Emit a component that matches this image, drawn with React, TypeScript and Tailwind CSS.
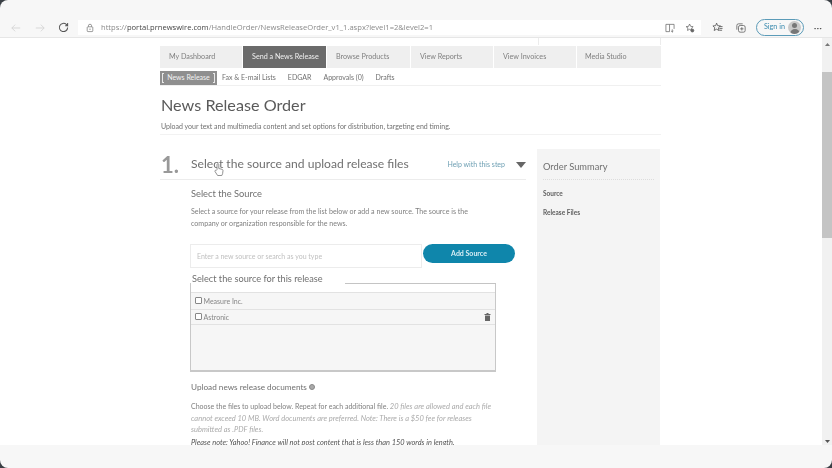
import React from "react";

const tabBase = "flex h-full shrink-0 items-center border-r border-white bg-[#efefef] pl-[9px] text-[#808080]";

export default function App() {
  return (
    <div className="relative flex h-[468px] w-[832px] flex-col overflow-hidden bg-white font-['Lato',sans-serif] text-[#666]">
      {/* browser toolbar */}
      <header className="flex h-[38px] shrink-0 flex-col border-b border-[#e6e6e6] bg-[#f7f7f7] blur-[0.5px]">
        <div className="h-[20px] shrink-0" />
        <div className="flex h-[15px] items-center">
          <div className="flex w-[78px] items-center pl-[11px]">
            <svg width="10" height="10" viewBox="0 0 12 12" fill="none" stroke="#d2d2d2" strokeWidth="1">
              <path d="M11 6H1M5 2 1 6l4 4" />
            </svg>
            <svg className="ml-[14px]" width="10" height="10" viewBox="0 0 12 12" fill="none" stroke="#d2d2d2" strokeWidth="1">
              <path d="M1 6h10M7 2l4 4-4 4" />
            </svg>
            <svg className="ml-[13px]" width="11" height="11" viewBox="0 0 12 12" fill="none" stroke="#555" strokeWidth="1.1">
              <path d="M10.5 6a4.5 4.5 0 1 1-1.4-3.3L10.5 4V1.2M10.5 4H7.8" />
            </svg>
          </div>
          <div className="flex h-full w-[623px] items-center bg-white pl-[8px] text-[#8a8a8a]">
            <svg width="8" height="10" viewBox="0 0 10 11" fill="none" stroke="#777" strokeWidth="0.9">
              <rect x="1.5" y="4" width="7" height="6" rx="1" />
              <path d="M3 4V2.8a2 2 0 0 1 4 0V4M4 7h2" />
            </svg>
            <span className="ml-[7px] whitespace-nowrap font-['Open_Sans',sans-serif] text-[7.6px]">
              https://<span className="text-[#444]">portal.prnewswire.com</span>/HandleOrder/NewsReleaseOrder_v1_1.aspx?level1=2&amp;level2=1
            </span>
            <div className="ml-auto flex items-center pr-[6px]">
              <svg width="10" height="10" viewBox="0 0 11 11" fill="none" stroke="#666" strokeWidth="0.8">
                <path d="M1 1.5h4v8H1zM5 1.5h5v5M8 7v3M6.8 8.8 8 10l1.2-1.2" />
              </svg>
              <svg className="ml-[10px]" width="10" height="10" viewBox="0 0 12 12" fill="none" stroke="#666" strokeWidth="0.9">
                <path d="M5.5 1.2 6.8 4l3 .4-2.2 2 .5 2.5-2.6-1.3L3 8.9l.5-3-2.2-1.5 3-.4z" />
                <circle cx="8.8" cy="9" r="1.8" fill="#666" />
              </svg>
            </div>
          </div>
          <div className="flex items-center pl-[11px]">
            <svg width="11" height="11" viewBox="0 0 12 12" fill="none" stroke="#555" strokeWidth="0.9">
              <path d="M5 1.2 6.2 4l3 .3-2.2 2 .6 3-2.6-1.5L2.4 9.3l.6-3L1 4.3 4 4zM8 5h3.5M8 7h3.5M8 9h3" />
            </svg>
            <svg className="ml-[13px]" width="10" height="10" viewBox="0 0 12 12" fill="none" stroke="#555" strokeWidth="0.9">
              <rect x="3" y="3" width="8" height="8" rx="2" />
              <path d="M1 8V3a2 2 0 0 1 2-2h5M7 5v4M5 7h4" />
            </svg>
            <div className="ml-[10px] flex h-[17px] w-[48px] items-center justify-between rounded-full border border-[#5b9bb8] pl-[7px] pr-[2px] text-[7.2px] text-[#3a8aae]">
              Sign in
              <div className="h-[13px] w-[13px] overflow-hidden rounded-full bg-[#c9c9c9]">
                <div className="mx-auto mt-[2px] h-[5px] w-[5px] rounded-full bg-[#777]" />
                <div className="mx-auto mt-[1px] h-[6px] w-[10px] rounded-t-full bg-[#777]" />
              </div>
            </div>
            <span className="ml-[10px] text-[8px] font-bold leading-none tracking-[0.5px] text-[#555]">···</span>
          </div>
        </div>
      </header>

      {/* page */}
      <div className="flex min-h-0 flex-1">
        <main className="min-w-0 flex-1 overflow-hidden blur-[0.5px]">
          <div className="ml-[160px] w-[501px]">
            <div className="ml-[378px] h-[7px] w-[123px] border-x border-[#ececec]" />
            <nav className="mt-px flex h-[22px] text-[7.2px]">
              <div className={`${tabBase} w-[83px]`}>My Dashboard</div>
              <div className="flex h-full w-[84px] shrink-0 items-center border-r border-white bg-[#6b6b6b] pl-[9px] text-[#f0f0f0]">Send a News Release</div>
              <div className={`${tabBase} w-[84px]`}>Browse Products</div>
              <div className={`${tabBase} w-[83px]`}>View Reports</div>
              <div className={`${tabBase} w-[83px]`}>View Invoices</div>
              <div className="flex h-full w-[84px] shrink-0 items-center bg-[#efefef] pl-[8px] text-[#808080]">Media Studio</div>
            </nav>
            <div className="mt-[2px] flex h-[16px] items-center border-b border-[#f0f0f0] text-[7px] text-[#707070]">
              <div className="relative flex h-[14px] w-[57px] items-center justify-center bg-[#8f8f8f] text-[#f2f2f2]">
                News Release
                <div className="absolute bottom-[2px] left-[2px] top-[2px] w-[2px] border-y border-l border-[#e8e8e8]" />
                <div className="absolute bottom-[2px] right-[2px] top-[2px] w-[2px] border-y border-r border-[#e8e8e8]" />
              </div>
              <span className="ml-[5px]">Fax &amp; E-mail Lists</span>
              <span className="ml-[12px]">EDGAR</span>
              <span className="ml-[12px]">Approvals (0)</span>
              <span className="ml-[12px]">Drafts</span>
            </div>
            <h1 className="mt-[8px] pl-px text-[16.2px] leading-[22px] text-[#5a5a5a]">News Release Order</h1>
            <p className="mt-[4px] pb-[2px] pl-px text-[7px] leading-[12px] text-[#707070]">
              Upload your text and multimedia content and set options for distribution, targeting end timing.
            </p>
            <div className="flex border-t border-[#f2f2f2] pt-[14px]">
              <div className="w-[366px] shrink-0">
                <div className="flex h-[31px] items-center border-b border-[#ececec] pt-px">
                  <span className="w-[31px] pl-px text-[22px] font-bold leading-none text-[#999]">1.</span>
                  <span className="whitespace-nowrap text-[12.1px] text-[#707070]">Select the source and upload release files</span>
                  <span className="ml-auto text-[7px] text-[#6d9fb3]">Help with this step</span>
                  <svg className="ml-[11px]" width="10" height="6" viewBox="0 0 10 6">
                    <path d="M0 0h10L5 6z" fill="#666" />
                  </svg>
                </div>
                <div className="pl-[30px]">
                  <h2 className="mt-[8px] pl-px text-[9.3px] leading-[12px] text-[#707070]">Select the Source</h2>
                  <p className="mt-[6px] w-[305px] pl-px text-[7.1px] leading-[12px] text-[#808080]">
                    Select a source for your release from the list below or add a new source. The source is the company or organization responsible for the news.
                  </p>
                  <div className="mt-[14px] flex w-[325px] items-start">
                    <div className="flex h-[24px] w-[232px] items-center border border-[#ececec] pl-[6px] text-[7px] text-[#c0c0c0]">
                      Enter a new source or search as you type
                    </div>
                    <button className="ml-[1px] h-[19px] w-[92px] rounded-full bg-[#0f86ab] text-[7px] font-bold text-[#d9eef5]">Add Source</button>
                  </div>
                  <div className="relative mt-[4px] w-[306px]">
                    <div className="h-[11px] pl-[2px] text-[9.2px] leading-[14px] text-[#707070]">Select the source for this release</div>
                    <div className="absolute right-0 top-[11px] h-px w-[151px] bg-[#c4c4c4]" />
                    <div className="h-[89px] border-x border-b-2 border-[#c8c8c8] bg-[#f6f6f6] text-[7px] text-[#858585]">
                      <div className="h-[9px] bg-white" />
                      <div className="flex h-[18px] items-center border-y border-[#e2e2e2] pl-[4px]">
                        <div className="mb-[2px] h-[7px] w-[7px] rounded-[1px] border border-[#888] bg-white" />
                        <span className="ml-[1.5px]">Measure Inc.</span>
                      </div>
                      <div className="flex h-[15px] items-center border-b border-[#e2e2e2] pl-[4px] pr-[4px]">
                        <div className="mb-[2px] h-[7px] w-[7px] rounded-[1px] border border-[#888] bg-white" />
                        <span className="ml-[1.5px]">Astronic</span>
                        <svg className="ml-auto" width="7" height="8" viewBox="0 0 7 8" fill="#666">
                          <path d="M0.5 1h6v1h-6zM2.5 0h2v1h-2zM1 2.4h5V8H1z" />
                        </svg>
                      </div>
                    </div>
                  </div>
                  <div className="mt-[9px] flex items-center pl-px text-[8.2px] leading-[12px] text-[#707070]">
                    Upload news release documents
                    <div className="ml-[2px] flex h-[6px] w-[6px] rounded-full border border-[#888] bg-[#aaa]" />
                  </div>
                  <p className="mt-[8px] w-[306px] pl-px text-[7px] leading-[11.5px] text-[#808080]">
                    Choose the files to upload below. Repeat for each additional file.{" "}
                    <i className="text-[7.5px] text-[#ababab]">
                      20 files are allowed and each file cannot exceed 10 MB. Word documents are preferred. Note: There is a $50 fee for releases submitted as .PDF files.
                    </i>
                  </p>
                  <p className="mt-px whitespace-nowrap pl-px text-[7.4px] italic leading-[11px] text-[#505050]">
                    Please note: Yahoo! Finance will not post content that is less than 150 words in length.
                  </p>
                </div>
              </div>
              <aside className="ml-[11px] h-[320px] w-[123px] shrink-0 bg-[#f4f4f4] px-[6px]">
                <h3 className="flex h-[31px] items-end border-b border-dotted border-[#dcdcdc] pb-[5px] text-[9.3px] text-[#707070]">Order Summary</h3>
                <div className="mt-[9px] text-[6.5px] font-bold leading-[10px] text-[#606060]">Source</div>
                <div className="mt-[9px] text-[6.5px] font-bold leading-[10px] text-[#606060]">Release Files</div>
              </aside>
            </div>
          </div>
        </main>
        {/* scrollbar */}
        <div className="flex w-[10px] shrink-0 flex-col items-center bg-[#f1f1f1]">
          <svg className="mt-[5px]" width="5" height="3" viewBox="0 0 5 3"><path d="M0 3h5L2.5 0z" fill="#777" /></svg>
          <div className="mt-[26px] h-[166px] w-full bg-[#c4c4c4]" />
          <svg className="mb-[2px] mt-auto" width="5" height="3" viewBox="0 0 5 3"><path d="M0 0h5L2.5 3z" fill="#555" /></svg>
        </div>
      </div>

      <div className="h-[23px] shrink-0 bg-[#f7f7f7]" />

      {/* mouse pointer over the step title */}
      <svg className="absolute left-[214px] top-[163px]" width="10" height="13" viewBox="0 0 10 13" fill="#fff" stroke="#777" strokeWidth="0.8">
        <path d="M3 6.5V1.6a.9.9 0 0 1 1.8 0V5.5l3.2.8c.6.2 1 .6 1 1.2l-.4 3.2-.8 1.8H3.6L1 8.5c-.5-.8.5-1.6 1.2-1z" />
      </svg>

      {/* window corners, over the page */}
      <div className="pointer-events-none absolute inset-0 rounded-[8px] shadow-[0_0_0_6px_#3a3f45]" />
    </div>
  );
}
